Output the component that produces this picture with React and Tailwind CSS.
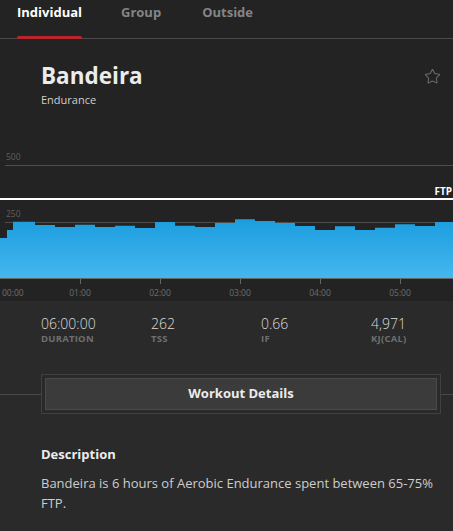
import { Star } from "lucide-react";

const steps = [
  [0, 7, 88],
  [7, 13, 80],
  [13, 35, 71.7],
  [35, 55, 75],
  [55, 75, 77],
  [75, 95, 74.7],
  [95, 115, 77],
  [115, 135, 75.7],
  [135, 155, 78],
  [155, 175, 72],
  [175, 195, 75.7],
  [195, 215, 77],
  [215, 235, 73],
  [235, 255, 69.3],
  [255, 275, 71],
  [275, 295, 73],
  [295, 315, 76],
  [315, 335, 80],
  [335, 355, 76.3],
  [355, 375, 80],
  [375, 395, 77.7],
  [395, 415, 74.3],
  [415, 435, 76],
  [435, 453, 72]
];

const stats = [
  { value: "06:00:00", label: "DURATION" },
  { value: "262", label: "TSS" },
  { value: "0.66", label: "IF" },
  { value: "4,971", label: "KJ(CAL)" }
];

function buildArea() {
  let d = "M0 128.5";
  steps.forEach(([x1, x2, y]) => {
    d += ` L${x1} ${y} L${x2} ${y}`;
  });
  return d + " L453 128.5 Z";
}

function PowerChart() {
  const hours = ["00:00", "01:00", "02:00", "03:00", "04:00", "05:00"];

  return (
    <svg width="453" height="151" viewBox="0 0 453 151" className="block">
      <defs>
        <linearGradient id="blueFill" x1="0" y1="0" x2="0" y2="1">
          <stop offset="0" stopColor="#1c9ddf" />
          <stop offset="1" stopColor="#45b7ee" />
        </linearGradient>
      </defs>
      <text x="6" y="10" fontSize="8.5" fill="#5e5e5e">500</text>
      <line x1="5" y1="15.5" x2="453" y2="15.5" stroke="#4d4d4d" strokeWidth="1" />
      <text x="452" y="45" fontSize="10" fontWeight="700" fill="#ffffff" textAnchor="end">FTP</text>
      <line x1="0" y1="49" x2="453" y2="49" stroke="#ffffff" strokeWidth="2" />
      <text x="6" y="67" fontSize="8.5" fill="#5e5e5e">250</text>
      <line x1="5" y1="72.5" x2="453" y2="72.5" stroke="#4d4d4d" strokeWidth="1" />
      <path d={buildArea()} fill="url(#blueFill)" />
      <line x1="0" y1="128.5" x2="453" y2="128.5" stroke="#666" strokeWidth="1" />
      {hours.map((h, i) => (
        <g key={h}>
          {i > 0 && (
            <line x1={i * 80 + 0.5} y1="128" x2={i * 80 + 0.5} y2="134" stroke="#666" strokeWidth="1" />
          )}
          <text
            x={i === 0 ? 2 : i * 80}
            y="146"
            fontSize="8.5"
            fill="#6e6e6e"
            textAnchor={i === 0 ? "start" : "middle"}
          >
            {h}
          </text>
        </g>
      ))}
    </svg>
  );
}

export default function App() {
  return (
    <div
      className="h-[531px] w-[453px] overflow-hidden bg-[#232323] text-[#e6e6e6]"
      style={{ fontFamily: '"Open Sans", "Noto Sans", sans-serif' }}
    >
      <nav className="flex h-[39px] border-b border-[#4a4a4a]">
        <div className="relative ml-[17px] flex w-[65px] items-start pt-[3px]">
          <span className="text-[13px] font-bold text-white">Individual</span>
          <span className="absolute -bottom-px left-0 h-[3px] w-[65px] rounded-sm bg-[#b8262b]" />
        </div>
        <span className="ml-[39px] pt-[3px] text-[13px] font-bold text-[#858585]">Group</span>
        <span className="ml-[41px] pt-[3px] text-[13px] font-bold text-[#858585]">Outside</span>
      </nav>

      <header className="flex h-[111px] items-start justify-between pl-[41px] pr-[12px] pt-[22px]">
        <div>
          <h1 className="text-[22.5px] leading-[30px] font-bold text-[#ececec]">Bandeira</h1>
          <p className="mt-[1px] text-[11px] text-[#cfcfcf]">Endurance</p>
        </div>
        <Star className="mt-[7px] h-[17px] w-[17px] text-[#6a6a6a]" strokeWidth={1.5} />
      </header>

      <PowerChart />

      <section className="bg-[#2a2a2a]">
        <div className="flex pl-[41px] pt-[14px]">
          {stats.map((s) => (
            <div key={s.label} className="w-[110px] shrink-0">
              <div className="text-[14px] leading-[18px] font-light text-[#dcdcdc]">{s.value}</div>
              <div className="text-[9.5px] leading-[12px] font-bold tracking-wide text-[#6f6f6f]">{s.label}</div>
            </div>
          ))}
        </div>

        <div className="relative mt-[29px] flex items-center">
          <div className="h-px flex-1 bg-[#494949]" />
          <div className="w-[400px] border border-[#404040] p-[3px]">
            <button
              type="button"
              className="flex h-[32px] w-full items-center justify-center border border-[#4a4a4a] bg-[#3b3b3b] text-[13px] font-bold text-[#ececec]"
            >
              Workout Details
            </button>
          </div>
          <div className="h-px w-[12px] bg-[#494949]" />
        </div>

        <div className="pb-[30px] pl-[41px] pr-[12px] pt-[30px]">
          <h2 className="text-[13px] leading-[20px] font-bold text-[#ececec]">Description</h2>
          <p className="mt-[9px] text-[13px] leading-[20px] text-[#cdcdcd]">
            Bandeira is 6 hours of Aerobic Endurance spent between 65-75% FTP.
          </p>
        </div>
      </section>
    </div>
  );
}
